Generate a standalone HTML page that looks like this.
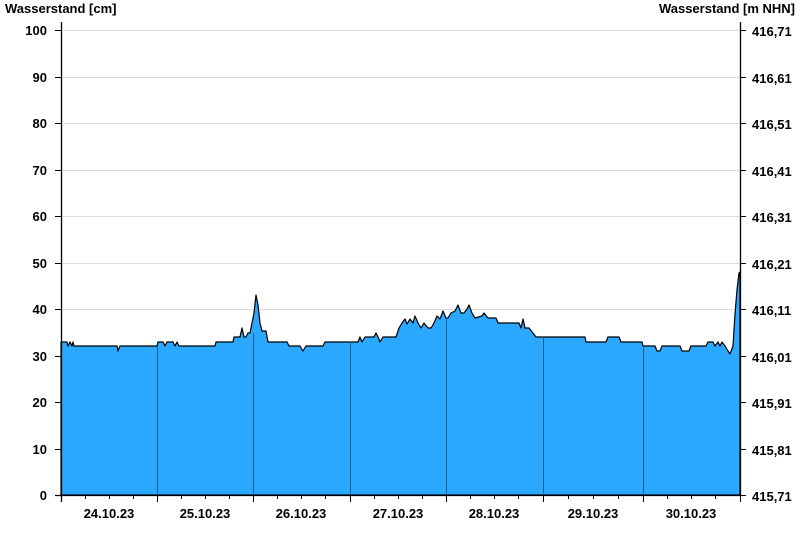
<!DOCTYPE html>
<html><head><meta charset="utf-8"><style>
html,body{margin:0;padding:0;background:#fff;width:800px;height:550px;overflow:hidden}
svg text{font-family:"Liberation Sans",Arial,sans-serif;font-weight:bold;font-size:13px;fill:#000}
</style></head><body>
<svg width="800" height="550" xmlns="http://www.w3.org/2000/svg">
<text x="5" y="13">Wasserstand [cm]</text>
<text x="795" y="13" text-anchor="end">Wasserstand [m NHN]</text>
<g stroke="#dcdcdc" stroke-width="1">
<line x1="61" x2="740" y1="30.5" y2="30.5"/><line x1="61" x2="740" y1="77.5" y2="77.5"/>
<line x1="61" x2="740" y1="123.5" y2="123.5"/><line x1="61" x2="740" y1="170.5" y2="170.5"/>
<line x1="61" x2="740" y1="216.5" y2="216.5"/><line x1="61" x2="740" y1="263.5" y2="263.5"/>
<line x1="61" x2="740" y1="309.5" y2="309.5"/><line x1="61" x2="740" y1="356.5" y2="356.5"/>
<line x1="61" x2="740" y1="402.5" y2="402.5"/><line x1="61" x2="740" y1="449.5" y2="449.5"/>
</g>
<polygon fill="#2ba8ff" stroke="#000" stroke-width="1.2" stroke-linejoin="round" points="61,342 67,342 68,346 70,342 72,346 73,342 74,346 117,346 118,351 120,346 157,346 158,342 163,342 165,346 167,342 173,342 175,346 177,342 179,346 215,346 216,342 233,342 234,337 240,337 242,328 244,337 246,337 248,333 250,333 252,323 254,313 256,295 258,305 260,323 262,331 266,331 268,342 287,342 289,346 300,346 303,351 306,346 323,346 325,342 358,342 360,337 362,342 365,337 374,337 376,333 378,337 380,342 383,337 396,337 399,328 402,323 405,319 407,324 410,319 413,323 415,316 418,323 421,328 424,323 428,328 431,328 434,323 437,316 440,319 443,311 446,318 448,318 451,313 455,311 458,305 461,313 464,313 467,309 469,305 472,313 475,318 482,316 484,313 488,318 496,318 498,323 519,323 521,328 523,319 525,328 529,328 533,333 536,337 585,337 586,342 606,342 608,337 619,337 621,342 642,342 643,346 655,346 657,351 660,351 662,346 680,346 682,351 689,351 691,346 706,346 708,342 713,342 715,346 718,342 720,346 722,342 725,346 728,351 730,354 733,346 735,314 737,290 739,273 740,272 740,495 61,495"/>
<g stroke="#1a5e8e" stroke-width="1">
<line x1="157.5" x2="157.5" y1="346" y2="495"/><line x1="253.5" x2="253.5" y1="333" y2="495"/>
<line x1="350.5" x2="350.5" y1="342" y2="495"/><line x1="446.5" x2="446.5" y1="318" y2="495"/>
<line x1="543.5" x2="543.5" y1="337" y2="495"/><line x1="643.5" x2="643.5" y1="346" y2="495"/>
</g>
<g stroke="#000" stroke-width="1.3" fill="none">
<line x1="61.5" x2="61.5" y1="22" y2="502"/><line x1="740.5" x2="740.5" y1="22" y2="495"/>
<line x1="55" x2="740" y1="495.5" y2="495.5"/>
</g>
<g stroke="#000" stroke-width="1">
<path d="M55 30.5h6M55 77.5h6M55 123.5h6M55 170.5h6M55 216.5h6M55 263.5h6M55 309.5h6M55 356.5h6M55 402.5h6M55 449.5h6"/>
<path d="M740 30.5h6M740 77.5h6M740 123.5h6M740 170.5h6M740 216.5h6M740 263.5h6M740 309.5h6M740 356.5h6M740 402.5h6M740 449.5h6M740 495.5h6"/>
<path d="M157.5 495v7M253.5 495v7M350.5 495v7M446.5 495v7M543.5 495v7M643.5 495v7M740.5 495v7"/>
<path d="M85.5 495v4M109.5 495v4M133.5 495v4M181.5 495v4M205.5 495v4M229.5 495v4M277.5 495v4M301.5 495v4M325.5 495v4M374.5 495v4M398.5 495v4M422.5 495v4M470.5 495v4M494.5 495v4M518.5 495v4M568.5 495v4M593.5 495v4M618.5 495v4M667.5 495v4M691.5 495v4M715.5 495v4"/>
</g>
<g text-anchor="end">
<text x="47" y="35">100</text><text x="47" y="82">90</text><text x="47" y="128">80</text><text x="47" y="175">70</text><text x="47" y="221">60</text><text x="47" y="268">50</text><text x="47" y="314">40</text><text x="47" y="361">30</text><text x="47" y="407">20</text><text x="47" y="454">10</text><text x="47" y="500">0</text>
</g>
<g>
<text x="752" y="36">416,71</text><text x="752" y="83">416,61</text><text x="752" y="129">416,51</text><text x="752" y="176">416,41</text><text x="752" y="222">416,31</text><text x="752" y="269">416,21</text><text x="752" y="315">416,11</text><text x="752" y="362">416,01</text><text x="752" y="408">415,91</text><text x="752" y="455">415,81</text><text x="752" y="501">415,71</text>
</g>
<g text-anchor="middle">
<text x="109" y="518">24.10.23</text><text x="205" y="518">25.10.23</text><text x="301" y="518">26.10.23</text><text x="398" y="518">27.10.23</text><text x="494" y="518">28.10.23</text><text x="593" y="518">29.10.23</text><text x="691" y="518">30.10.23</text>
</g>
</svg>
</body></html>
